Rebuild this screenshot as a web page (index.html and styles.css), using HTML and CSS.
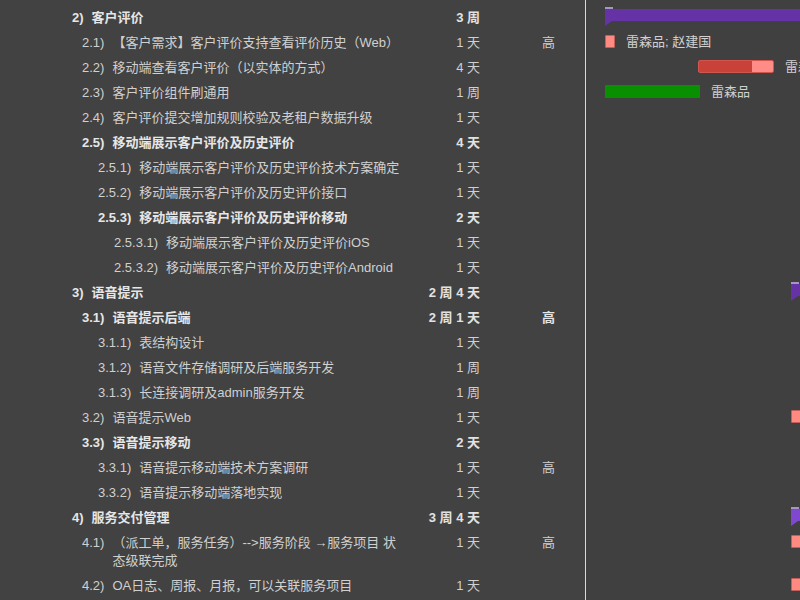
FILE: index.html
```html
<!DOCTYPE html>
<html lang="zh">
<head>
<meta charset="utf-8">
<title>Gantt</title>
<link rel="stylesheet" href="styles.css">
</head>
<body>
<div class="app">
  <div class="table">
    <div class="row bold"><div class="name l1"><span class="num">2)</span><span class="txt">客户评价</span></div><div class="dur">3 周</div><div class="pri"></div></div>
    <div class="row"><div class="name l2"><span class="num">2.1)</span><span class="txt">【客户需求】客户评价支持查看评价历史（Web）</span></div><div class="dur">1 天</div><div class="pri">高</div></div>
    <div class="row"><div class="name l2"><span class="num">2.2)</span><span class="txt">移动端查看客户评价（以实体的方式）</span></div><div class="dur">4 天</div><div class="pri"></div></div>
    <div class="row"><div class="name l2"><span class="num">2.3)</span><span class="txt">客户评价组件刷通用</span></div><div class="dur">1 周</div><div class="pri"></div></div>
    <div class="row"><div class="name l2"><span class="num">2.4)</span><span class="txt">客户评价提交增加规则校验及老租户数据升级</span></div><div class="dur">1 天</div><div class="pri"></div></div>
    <div class="row bold"><div class="name l2"><span class="num">2.5)</span><span class="txt">移动端展示客户评价及历史评价</span></div><div class="dur">4 天</div><div class="pri"></div></div>
    <div class="row"><div class="name l3"><span class="num">2.5.1)</span><span class="txt">移动端展示客户评价及历史评价技术方案确定</span></div><div class="dur">1 天</div><div class="pri"></div></div>
    <div class="row"><div class="name l3"><span class="num">2.5.2)</span><span class="txt">移动端展示客户评价及历史评价接口</span></div><div class="dur">1 天</div><div class="pri"></div></div>
    <div class="row bold"><div class="name l3"><span class="num">2.5.3)</span><span class="txt">移动端展示客户评价及历史评价移动</span></div><div class="dur">2 天</div><div class="pri"></div></div>
    <div class="row"><div class="name l4"><span class="num">2.5.3.1)</span><span class="txt">移动端展示客户评价及历史评价iOS</span></div><div class="dur">1 天</div><div class="pri"></div></div>
    <div class="row"><div class="name l4"><span class="num">2.5.3.2)</span><span class="txt">移动端展示客户评价及历史评价Android</span></div><div class="dur">1 天</div><div class="pri"></div></div>
    <div class="row bold"><div class="name l1"><span class="num">3)</span><span class="txt">语音提示</span></div><div class="dur">2 周 4 天</div><div class="pri"></div></div>
    <div class="row bold"><div class="name l2"><span class="num">3.1)</span><span class="txt">语音提示后端</span></div><div class="dur">2 周 1 天</div><div class="pri">高</div></div>
    <div class="row"><div class="name l3"><span class="num">3.1.1)</span><span class="txt">表结构设计</span></div><div class="dur">1 天</div><div class="pri"></div></div>
    <div class="row"><div class="name l3"><span class="num">3.1.2)</span><span class="txt">语音文件存储调研及后端服务开发</span></div><div class="dur">1 周</div><div class="pri"></div></div>
    <div class="row"><div class="name l3"><span class="num">3.1.3)</span><span class="txt">长连接调研及admin服务开发</span></div><div class="dur">1 周</div><div class="pri"></div></div>
    <div class="row"><div class="name l2"><span class="num">3.2)</span><span class="txt">语音提示Web</span></div><div class="dur">1 天</div><div class="pri"></div></div>
    <div class="row bold"><div class="name l2"><span class="num">3.3)</span><span class="txt">语音提示移动</span></div><div class="dur">2 天</div><div class="pri"></div></div>
    <div class="row"><div class="name l3"><span class="num">3.3.1)</span><span class="txt">语音提示移动端技术方案调研</span></div><div class="dur">1 天</div><div class="pri">高</div></div>
    <div class="row"><div class="name l3"><span class="num">3.3.2)</span><span class="txt">语音提示移动端落地实现</span></div><div class="dur">1 天</div><div class="pri"></div></div>
    <div class="row bold"><div class="name l1"><span class="num">4)</span><span class="txt">服务交付管理</span></div><div class="dur">3 周 4 天</div><div class="pri"></div></div>
    <div class="row"><div class="name l2"><span class="num">4.1)</span><span class="txt">（派工单，服务任务）--&gt;服务阶段 →服务项目 状<br>态级联完成</span></div><div class="dur">1 天</div><div class="pri">高</div></div>
    <div class="row"><div class="name l2"><span class="num">4.2)</span><span class="txt">OA日志、周报、月报，可以关联服务项目</span></div><div class="dur">1 天</div><div class="pri"></div></div>
  </div>
  <div class="divider"></div>
  <div class="gantt">
    <div class="grow"><div class="summary" style="left:19px;width:220px"></div></div>
    <div class="grow"><div class="task" style="left:19px"><span class="bar box"></span><span class="lbl">雷森品; 赵建国</span></div></div>
    <div class="grow"><div class="task" style="left:112px"><span class="bar progress" style="width:76px"></span><span class="lbl">雷森</span></div></div>
    <div class="grow"><div class="task" style="left:19px"><span class="bar green" style="width:95px"></span><span class="lbl">雷森品</span></div></div>
    <div class="grow"></div>
    <div class="grow"></div>
    <div class="grow"></div>
    <div class="grow"></div>
    <div class="grow"></div>
    <div class="grow"></div>
    <div class="grow"></div>
    <div class="grow"><div class="summary" style="left:205px;width:40px"></div></div>
    <div class="grow"></div>
    <div class="grow"></div>
    <div class="grow"></div>
    <div class="grow"></div>
    <div class="grow"><div class="task" style="left:205px"><span class="bar box"></span></div></div>
    <div class="grow"></div>
    <div class="grow"></div>
    <div class="grow"></div>
    <div class="grow"><div class="summary active" style="left:205px;width:40px"></div></div>
    <div class="grow tall"><div class="task" style="left:205px"><span class="bar box"></span></div></div>
    <div class="grow"><div class="task" style="left:205px"><span class="bar box"></span></div></div>
  </div>
</div>
</body>
</html>
```

FILE: styles.css
```css
html, body {
  margin: 0;
  padding: 0;
}
body {
  background: #424242;
  color: #d0d0d0;
  font-family: "Liberation Sans", "Noto Sans CJK SC", sans-serif;
  font-size: 13px;
}
.app {
  display: flex;
  width: 800px;
  height: 600px;
  overflow: hidden;
}
.table {
  width: 585px;
  flex: none;
  padding-top: 5px;
}
.row {
  display: grid;
  grid-template-columns: 400px 80px 105px;
  align-items: start;
  padding: 4px 0 3px;
  line-height: 18px;
}
.row.bold {
  font-weight: bold;
  color: #e6e6e6;
}
.name {
  display: flex;
  gap: 8px;
  box-sizing: border-box;
}
.num {
  flex: none;
}
.l1 { padding-left: 72px; }
.l2 { padding-left: 82px; }
.l3 { padding-left: 98px; }
.l4 { padding-left: 114px; }
.dur {
  text-align: right;
  font-weight: normal;
  color: #d0d0d0;
}
.row.bold .dur {
  font-weight: bold;
  color: #e2e2e2;
}
.pri {
  padding-left: 62px;
}
.divider {
  width: 1px;
  flex: none;
  background: #d8d8d8;
}
.gantt {
  flex: 1;
  padding-top: 5px;
  background: #404040;
  overflow: hidden;
}
.grow {
  position: relative;
  height: 25px;
}
.grow.tall {
  height: 43px;
}
.task {
  position: absolute;
  top: 5px;
  height: 13px;
  display: flex;
  align-items: center;
  gap: 11px;
  white-space: nowrap;
}
.bar {
  display: block;
  height: 13px;
  box-sizing: border-box;
  border-radius: 1px;
}
.bar.box {
  width: 10px;
  background: #ff8a82;
  border: 1px solid #c0605a;
}
.bar.progress {
  background: linear-gradient(to right, #c8423a 0 71%, #ff8c86 71%);
  border: 1px solid #d0564e;
  border-radius: 2px;
}
.bar.green {
  background: #089000;
  border-radius: 1px;
}
.lbl {
  color: #d0d0d0;
  line-height: 13px;
}
.summary {
  position: absolute;
  top: 4px;
  height: 12px;
  background: #6633a6;
}
.summary::before {
  content: "";
  position: absolute;
  left: 0;
  top: -2px;
  width: 8px;
  height: 2px;
  background: #a596c2;
}
.summary::after {
  content: "";
  position: absolute;
  left: 0;
  top: 100%;
  border-left: 7px solid #6633a6;
  border-bottom: 5px solid transparent;
}
.summary.active {
  background: #7f48cf;
}
.summary.active::after {
  border-left-color: #7f48cf;
}
```
